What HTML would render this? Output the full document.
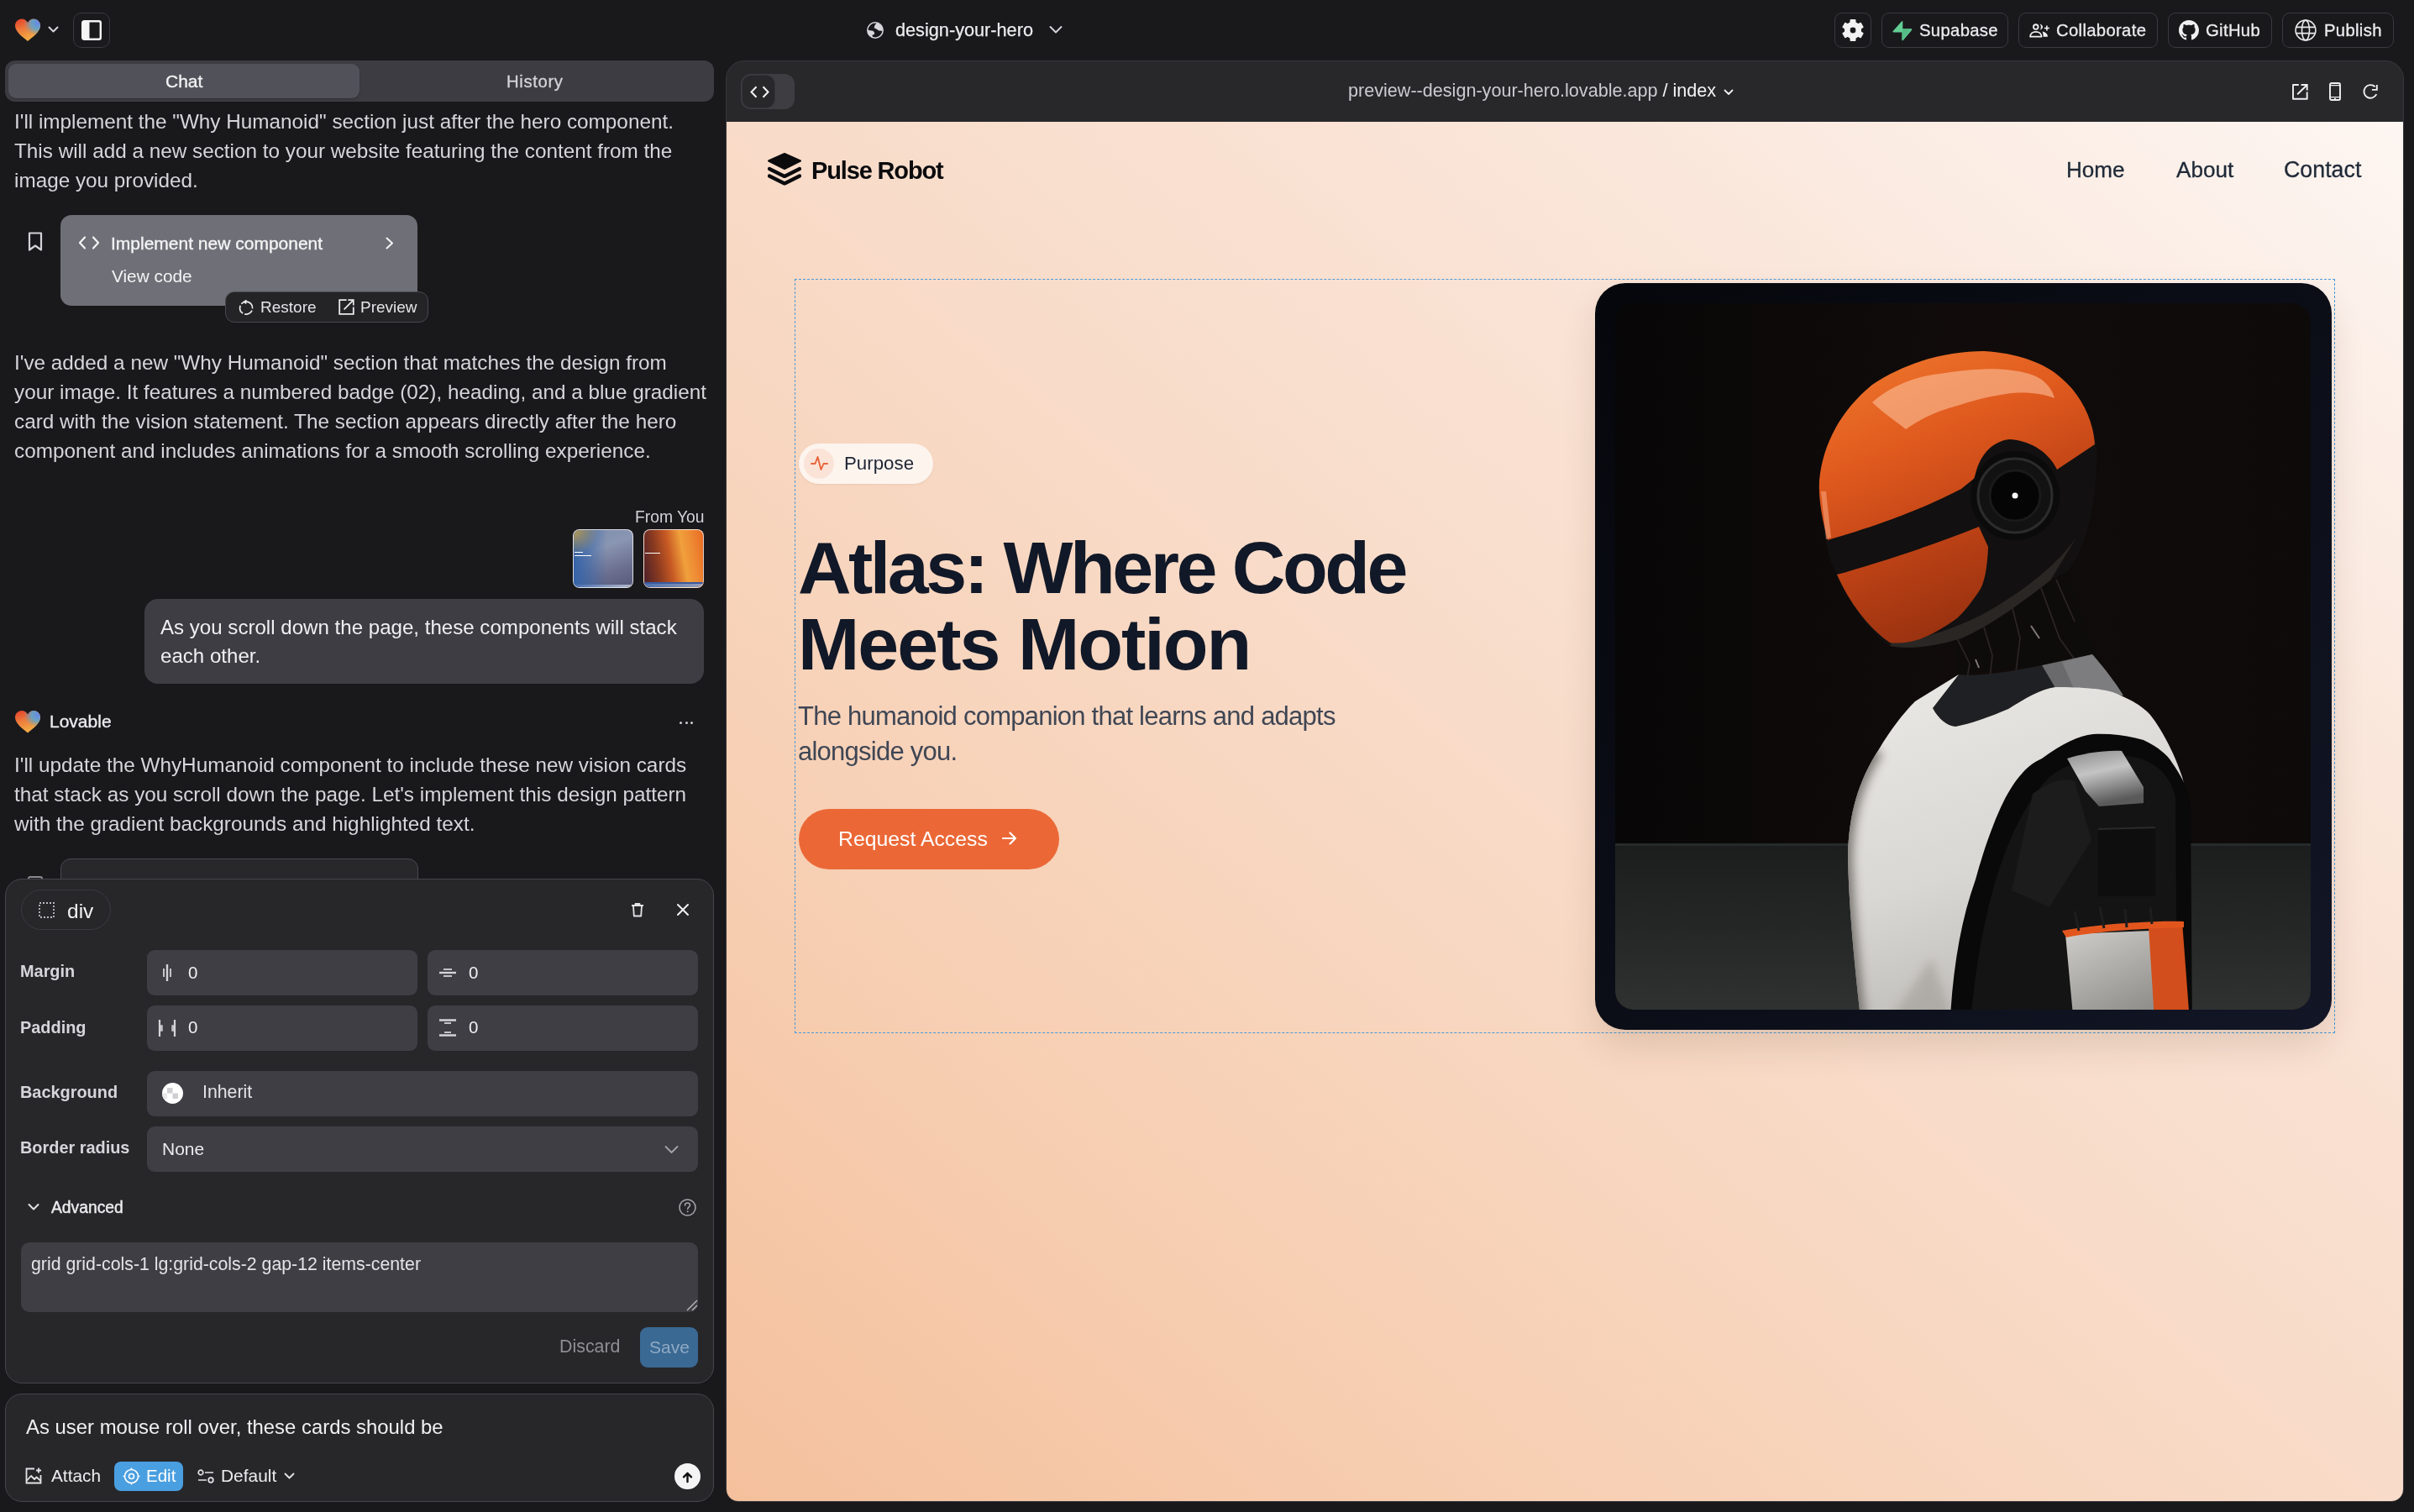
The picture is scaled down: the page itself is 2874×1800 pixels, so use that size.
<!DOCTYPE html>
<html><head><meta charset="utf-8">
<style>
*{box-sizing:border-box;margin:0;padding:0}
html,body{width:2874px;height:1800px;overflow:hidden;background:#19191c;-webkit-font-smoothing:antialiased;font-family:"Liberation Sans",sans-serif;color:#e4e4e7}
.a{position:absolute}
.t{position:absolute;white-space:nowrap;line-height:1;will-change:transform}
svg{position:absolute;overflow:visible}
.btn{position:absolute;border:1.5px solid #3a3a3f;border-radius:9px;background:#19191c}
.chat{position:absolute;left:18px;font-size:24px;line-height:35px;color:#d6d6da;white-space:nowrap;will-change:transform}
.inp{position:absolute;background:#3f3e45;border-radius:9px}
.lbl{position:absolute;font-size:21px;font-weight:bold;color:#d6d6da;white-space:nowrap;line-height:1;will-change:transform}
</style></head><body>

<!-- ===== TOP BAR ===== -->
<div id="topbar">
  <!-- heart logo -->
  <svg style="left:17px;top:22px" width="32" height="28" viewBox="0 0 32 28">
    <defs><linearGradient id="hg" x1="0.1" y1="0" x2="0.5" y2="1">
      <stop offset="0" stop-color="#e3402a"/><stop offset="0.45" stop-color="#ee7a3c"/><stop offset="1" stop-color="#f3b246"/></linearGradient>
      <radialGradient id="hb" cx="0.9" cy="0.2" r="0.55"><stop offset="0" stop-color="#6a86e8"/><stop offset="0.45" stop-color="#52a8d8" stop-opacity="0.85"/><stop offset="1" stop-color="#52a8d8" stop-opacity="0"/></radialGradient></defs>
    <path d="M16 27 C10 22 1 16 1 8.5 C1 3.5 5 0.5 9 0.5 C12 0.5 14.5 2.5 16 5 C17.5 2.5 20 0.5 23 0.5 C27 0.5 31 3.5 31 8.5 C31 16 22 22 16 27Z" fill="url(#hg)"/>
    <path d="M16 27 C10 22 1 16 1 8.5 C1 3.5 5 0.5 9 0.5 C12 0.5 14.5 2.5 16 5 C17.5 2.5 20 0.5 23 0.5 C27 0.5 31 3.5 31 8.5 C31 16 22 22 16 27Z" fill="url(#hb)"/>
  </svg>
  <svg style="left:57px;top:31px" width="13" height="9" viewBox="0 0 13 9"><path d="M1.5 1.5 L6.5 6.5 L11.5 1.5" fill="none" stroke="#d4d4d8" stroke-width="2" stroke-linecap="round" stroke-linejoin="round"/></svg>
  <div class="btn" style="left:87px;top:15px;width:44px;height:42px;border-radius:10px;background:#1a1a1d"></div>
  <svg style="left:97px;top:24px" width="24" height="24" viewBox="0 0 24 24"><rect x="1.2" y="1.2" width="21.6" height="21.6" rx="2" fill="none" stroke="#f4f4f5" stroke-width="2.4"/><rect x="1.5" y="1.5" width="8" height="21" fill="#f4f4f5"/></svg>

  <!-- project name -->
  <svg style="left:1032px;top:26px" width="20" height="20" viewBox="0 0 20 20"><circle cx="10" cy="10" r="9.2" fill="none" stroke="#d8d8dc" stroke-width="1.5"/><path d="M11.7 1.2 C10 3.2 9 4.5 8.7 7.2 C10.5 8 12 8.5 14.2 10.4 L19 10.85 A9.2 9.2 0 0 0 11.7 1.2 Z" fill="#d8d8dc"/><path d="M0.8 9.8 L7.25 10.64 C9 12 9.5 13.5 8.94 14.87 L6.2 15.9 L7.7 18.9 A9.2 9.2 0 0 1 0.8 9.8 Z" fill="#d8d8dc"/></svg>
  <div class="t" id="proj" style="left:1066px;top:24.5px;font-size:21.7px;color:#ececef;-webkit-text-stroke:0.25px #ececef">design-your-hero</div>
  <svg style="left:1249px;top:30px" width="16" height="11" viewBox="0 0 16 11"><path d="M1.5 2 L8 8.5 L14.5 2" fill="none" stroke="#d4d4d8" stroke-width="2" stroke-linecap="round" stroke-linejoin="round"/></svg>

  <!-- right buttons -->
  <div class="btn" style="left:2184px;top:15px;width:44px;height:42px"></div>
  <svg style="left:2192.5px;top:22.5px" width="26" height="26" viewBox="0 0 26 26"><path fill="#f2f2f3" fill-rule="evenodd" stroke="#f2f2f3" stroke-width="1.2" stroke-linejoin="round" d="M8.30 4.86 L9.94 4.11 L10.17 0.72 L15.83 0.72 L16.06 4.11 L17.70 4.86 L19.17 5.91 L22.22 4.41 L25.05 9.32 L22.23 11.21 L22.40 13.00 L22.23 14.79 L25.05 16.68 L22.22 21.59 L19.17 20.09 L17.70 21.14 L16.06 21.89 L15.83 25.28 L10.17 25.28 L9.94 21.89 L8.30 21.14 L6.83 20.09 L3.78 21.59 L0.95 16.68 L3.77 14.79 L3.60 13.00 L3.77 11.21 L0.95 9.32 L3.78 4.41 L6.83 5.91Z M17.00 13.00 A4 4 0 1 0 9.00 13.00 A4 4 0 1 0 17.00 13.00Z"/></svg>

  <div class="btn" style="left:2240px;top:15px;width:151px;height:42px"></div>
  <svg style="left:2253px;top:23.5px" width="24" height="25" viewBox="0 0 24 25"><defs><linearGradient id="sbg" x1="0" y1="0" x2="1" y2="1"><stop offset="0" stop-color="#4fb37f"/><stop offset="1" stop-color="#63cd94"/></linearGradient></defs><path d="M11.2 1.2 C11.6 0.7 12.3 0.9 12.3 1.6 V10.2 H22.3 C23.1 10.2 23.5 11.1 23 11.7 L12.6 24 C12.2 24.5 11.5 24.2 11.5 23.6 V14.6 H1.4 C0.6 14.6 0.2 13.7 0.7 13.1 Z" fill="#63cd94"/><path d="M12.3 10.2 H22.3 C23.1 10.2 23.5 11.1 23 11.7 L12.6 24 C12.2 24.5 11.5 24.2 11.5 23.6 V14.6 H12.3 Z" fill="url(#sbg)"/></svg>
  <div class="t" id="bsup" style="left:2284.5px;top:25.6px;font-size:20.3px;letter-spacing:0.32px;color:#ececef;-webkit-text-stroke:0.3px #ececef">Supabase</div>

  <div class="btn" style="left:2403px;top:15px;width:166px;height:42px"></div>
  <svg style="left:2414px;top:26px" width="27" height="20" viewBox="0 0 27 20"><circle cx="9.76" cy="6.06" r="2.8" fill="none" stroke="#f2f2f3" stroke-width="1.8"/><path d="M14.4 2.4 C16.6 3 18 4.5 18 6.1 C18 7.7 16.6 9.2 14.4 9.8 C15.4 8.8 15.9 7.5 15.9 6.1 C15.9 4.7 15.4 3.4 14.4 2.4 Z" fill="#f2f2f3"/><path d="M22.9 4.5 V10.5 M19.9 7.5 H25.9" stroke="#f2f2f3" stroke-width="1.6"/><path d="M3.1 17.7 C3.1 14 6 11.8 9.8 11.8 C13.6 11.8 16.5 14 16.5 17.7 Z" fill="none" stroke="#f2f2f3" stroke-width="1.8" stroke-linejoin="round"/><path d="M17.6 11.6 C20.8 12.2 23.9 14 23.9 17.7 H18.6 C18.6 15 18.3 13 17.6 11.6 Z" fill="#f2f2f3"/></svg>
  <div class="t" id="bcol" style="left:2448px;top:25.6px;font-size:20.3px;letter-spacing:0.32px;color:#ececef;-webkit-text-stroke:0.3px #ececef">Collaborate</div>

  <div class="btn" style="left:2581px;top:15px;width:124px;height:42px"></div>
  <svg style="left:2594px;top:24px" width="24" height="24" viewBox="0 0 16 16"><path fill="#f0f0f2" d="M8 0C3.58 0 0 3.58 0 8c0 3.54 2.29 6.53 5.47 7.59.4.07.55-.17.55-.38 0-.19-.01-.82-.01-1.49-2.01.37-2.53-.49-2.69-.94-.09-.23-.48-.94-.82-1.13-.28-.15-.68-.52-.01-.53.63-.01 1.08.58 1.23.82.72 1.21 1.87.87 2.33.66.07-.52.28-.87.51-1.07-1.78-.2-3.64-.89-3.64-3.95 0-.87.31-1.59.82-2.15-.08-.2-.36-1.02.08-2.12 0 0 .67-.21 2.2.82.64-.18 1.32-.27 2-.27.68 0 1.36.09 2 .27 1.53-1.04 2.2-.82 2.2-.82.44 1.1.16 1.92.08 2.12.51.56.82 1.27.82 2.15 0 3.07-1.87 3.75-3.65 3.95.29.25.54.73.54 1.48 0 1.07-.01 1.93-.01 2.2 0 .21.15.46.55.38A8.013 8.013 0 0016 8c0-4.42-3.58-8-8-8z"/></svg>
  <div class="t" id="bgit" style="left:2626px;top:25.6px;font-size:20.3px;letter-spacing:0.32px;color:#ececef;-webkit-text-stroke:0.3px #ececef">GitHub</div>

  <div class="btn" style="left:2717px;top:15px;width:133px;height:42px"></div>
  <svg style="left:2732px;top:23px" width="26" height="26" viewBox="0 0 26 26"><g fill="none" stroke="#e8e8ea" stroke-width="1.6"><circle cx="13" cy="13" r="11.9"/><ellipse cx="13" cy="13" rx="4.5" ry="11.9"/><path d="M1.7 9.4 H24.3 M1.7 16.6 H24.3"/></g></svg>
  <div class="t" id="bpub" style="left:2767px;top:25.6px;font-size:20.3px;letter-spacing:0.32px;color:#ececef;-webkit-text-stroke:0.3px #ececef">Publish</div>
</div>

<!-- ===== LEFT PANEL ===== -->
<div id="left">
  <!-- tabs -->
  <div class="a" style="left:6px;top:72px;width:844px;height:49px;background:#3d3c43;border-radius:12px"></div>
  <div class="a" style="left:10px;top:76px;width:418px;height:41px;background:#51515a;border-radius:9px;box-shadow:0 1px 2px rgba(0,0,0,0.25)"></div>
  <div class="t" id="tchat" style="left:196.5px;top:86px;font-size:21px;color:#f4f4f5;-webkit-text-stroke:0.3px #f4f4f5">Chat</div>
  <div class="t" id="thist" style="left:603.2px;top:87px;font-size:20.3px;letter-spacing:0.65px;color:#d4d4d8;-webkit-text-stroke:0.3px #d4d4d8">History</div>

  <!-- para 1 -->
  <div class="chat" id="p1" style="left:17px;top:126.6px;font-size:24.3px">I'll implement the "Why Humanoid" section just after the hero component.<br>This will add a new section to your website featuring the content from the<br>image you provided.</div>

  <!-- bookmark -->
  <svg style="left:33px;top:276px" width="18" height="23" viewBox="0 0 18 23"><path d="M2 1.5 H16 V21.5 L9 16.5 L2 21.5Z" fill="none" stroke="#d4d4d8" stroke-width="2.2" stroke-linejoin="round"/></svg>
  <!-- implement card -->
  <div class="a" style="left:72px;top:256px;width:425px;height:108px;background:#6f6f78;border-radius:13px"></div>
  <svg style="left:93px;top:281px" width="26" height="16" viewBox="0 0 26 16"><path d="M8 1.5 L2 8 L8 14.5 M18 1.5 L24 8 L18 14.5" fill="none" stroke="#f4f4f5" stroke-width="2.2" stroke-linecap="round" stroke-linejoin="round"/></svg>
  <div class="t" id="impl" style="left:131.7px;top:279px;font-size:21px;color:#f4f4f5;-webkit-text-stroke:0.35px #f4f4f5">Implement new component</div>
  <svg style="left:459px;top:282px" width="10" height="15" viewBox="0 0 10 15"><path d="M1.5 1.5 L8 7.5 L1.5 13.5" fill="none" stroke="#f4f4f5" stroke-width="2" stroke-linecap="round" stroke-linejoin="round"/></svg>
  <div class="t" id="vcode" style="left:133px;top:318.6px;font-size:20.8px;color:#f4f4f5">View code</div>
  <!-- restore/preview toolbar -->
  <div class="a" style="left:268px;top:346.5px;width:241.5px;height:37.5px;background:#242427;border:1.5px solid #48484d;border-radius:11px"></div>
  <svg style="left:284px;top:357px" width="19" height="19" viewBox="0 0 19 19"><circle cx="9.1" cy="9.6" r="7.5" fill="none" stroke="#ececef" stroke-width="1.7" stroke-dasharray="10.5 2.3" transform="rotate(-75 9.1 9.6)"/><path d="M9.6 0.6 L6.8 2.3 L9.3 4.4" fill="none" stroke="#ececef" stroke-width="1.7" stroke-linejoin="round"/></svg>
  <div class="t" id="rest" style="left:309.7px;top:356.4px;font-size:19px;color:#e4e4e7">Restore</div>
  <svg style="left:402.5px;top:355.5px" width="19" height="19" viewBox="0 0 19 19"><path d="M9.6 1.2 H1.2 V17.8 H17.8 V9.6" fill="none" stroke="#ececef" stroke-width="1.8"/><path d="M11.4 1.2 H17.8 V7.6 M6.6 12.4 L17.3 1.7" fill="none" stroke="#ececef" stroke-width="1.7"/></svg>
  <div class="t" id="prev" style="left:428.5px;top:356.4px;font-size:19px;color:#e4e4e7">Preview</div>

  <!-- para 2 -->
  <div class="chat" id="p2" style="left:17px;top:413.8px;font-size:24.3px">I've added a new "Why Humanoid" section that matches the design from<br>your image. It features a numbered badge (02), heading, and a blue gradient<br>card with the vision statement. The section appears directly after the hero<br>component and includes animations for a smooth scrolling experience.</div>

  <!-- from you -->
  <div class="t" id="fromyou" style="left:756px;top:605.7px;font-size:19.3px;color:#d4d4d8">From You</div>
  <div class="a" style="left:682px;top:630px;width:72px;height:70px;border-radius:8px;overflow:hidden;border:1px solid rgba(255,255,255,0.75);background:linear-gradient(160deg,#7a8cad 0%,#8a96b2 35%,#6c7090 70%,#565878 100%)">
    <div class="a" style="left:0;top:0;width:72px;height:70px;background:radial-gradient(circle at 0% 0%,#b89a50 0,rgba(184,154,80,0) 30%),linear-gradient(90deg,#3563a8 0,rgba(53,99,168,0.6) 25%,rgba(53,99,168,0) 55%)"></div>
    <div class="a" style="left:1px;top:26px;width:10px;height:1px;background:#fff"></div>
    <div class="a" style="left:1px;top:30px;width:20px;height:1px;background:#fff"></div>
    <div class="a" style="left:0;top:65px;width:72px;height:5px;background:linear-gradient(90deg,#4a70b0,#b8bccc)"></div>
  </div>
  <div class="a" style="left:766px;top:630px;width:72px;height:70px;border-radius:8px;overflow:hidden;border:1px solid rgba(255,255,255,0.75);background:linear-gradient(80deg,#4a1e2a 0%,#8a3a20 25%,#c85a24 45%,#f0a03c 65%,#ee8a34 80%,#e86a22 100%)">
    <div class="a" style="left:1px;top:27px;width:18px;height:1px;background:#fff"></div>
    <div class="a" style="left:0;top:62px;width:72px;height:2px;background:#3a5aa0"></div>
    <div class="a" style="left:0;top:64px;width:72px;height:6px;background:linear-gradient(90deg,#4a70b0,#9aa0b8)"></div>
  </div>
  <!-- user bubble -->
  <div class="a" style="left:172px;top:713px;width:666px;height:101px;background:#3e3d44;border-radius:16px"></div>
  <div class="chat" id="ub" style="left:190.5px;top:730.1px;font-size:24.1px;line-height:34px;color:#f0f0f2">As you scroll down the page, these components will stack<br>each other.</div>

  <!-- lovable -->
  <svg style="left:17px;top:845px" width="32" height="29" viewBox="0 0 32 28">
    <path d="M16 27 C10 22 1 16 1 8.5 C1 3.5 5 0.5 9 0.5 C12 0.5 14.5 2.5 16 5 C17.5 2.5 20 0.5 23 0.5 C27 0.5 31 3.5 31 8.5 C31 16 22 22 16 27Z" fill="url(#hg)"/>
    <path d="M16 27 C10 22 1 16 1 8.5 C1 3.5 5 0.5 9 0.5 C12 0.5 14.5 2.5 16 5 C17.5 2.5 20 0.5 23 0.5 C27 0.5 31 3.5 31 8.5 C31 16 22 22 16 27Z" fill="url(#hb)"/>
  </svg>
  <div class="t" id="lov" style="left:58.8px;top:848.2px;font-size:21px;color:#ececef;-webkit-text-stroke:0.35px #ececef">Lovable</div>
  <div class="a" style="left:809px;top:858.5px;width:3px;height:3px;border-radius:1.5px;background:#d0d0d4"></div>
  <div class="a" style="left:815.5px;top:858.5px;width:3px;height:3px;border-radius:1.5px;background:#d0d0d4"></div>
  <div class="a" style="left:822px;top:858.5px;width:3px;height:3px;border-radius:1.5px;background:#d0d0d4"></div>

  <!-- para 3 -->
  <div class="chat" id="p3" style="left:17px;top:893.1px;font-size:24.3px">I'll update the WhyHumanoid component to include these new vision cards<br>that stack as you scroll down the page. Let's implement this design pattern<br>with the gradient backgrounds and highlighted text.</div>

  <!-- next card peeking -->
  <div class="a" style="left:72px;top:1022px;width:426px;height:60px;background:#28282b;border:1.5px solid #4a4a4f;border-radius:12px"></div>
  <div class="a" style="left:33px;top:1043px;width:18px;height:10px;border:2px solid #8a8a90;border-bottom:none;border-radius:3px 3px 0 0"></div>

  <!-- ===== edit panel ===== -->
  <div class="a" style="left:6px;top:1046px;width:844px;height:601px;background:#27272a;border:1.5px solid #46464b;border-radius:20px"></div>
  <div class="a" style="left:25px;top:1059px;width:107px;height:48px;border:1.5px solid #3a3a3f;border-radius:24px"></div>
  <svg style="left:46px;top:1074px" width="19" height="19" viewBox="0 0 19 19"><rect x="1" y="1" width="17" height="17" fill="none" stroke="#bbbbc0" stroke-width="1.8" stroke-dasharray="2 2"/></svg>
  <div class="t" id="divt" style="left:80px;top:1072.5px;font-size:24.5px;color:#f0f0f2">div</div>
  <svg style="left:751px;top:1074px" width="16" height="18" viewBox="0 0 16 18"><path d="M1 4 H15 M5.5 4 V2 H10.5 V4 M3 4 L3.8 16.5 H12.2 L13 4" fill="none" stroke="#e4e4e7" stroke-width="1.8" stroke-linejoin="round"/></svg>
  <svg style="left:806px;top:1076px" width="14" height="14" viewBox="0 0 14 14"><path d="M1 1 L13 13 M13 1 L1 13" stroke="#f0f0f2" stroke-width="2" stroke-linecap="round"/></svg>

  <div class="lbl" id="lmargin" style="left:23.7px;top:1147.4px;font-size:19.9px">Margin</div>
  <div class="inp" style="left:175px;top:1131px;width:322px;height:54px"></div>
  <div class="inp" style="left:509px;top:1131px;width:322px;height:54px"></div>
  <svg style="left:193px;top:1148px" width="12" height="20" viewBox="0 0 12 20"><path d="M2 5 V15 M10 5 V15" stroke="#c4c4c8" stroke-width="2"/><path d="M6 0 V20" stroke="#d4d4d8" stroke-width="2.4"/></svg>
  <div class="t" id="m0a" style="left:223.5px;top:1147.6px;font-size:20.5px;color:#f0f0f2">0</div>
  <svg style="left:523px;top:1152px" width="20" height="12" viewBox="0 0 20 12"><path d="M5 2 H15 M5 10 H15" stroke="#c4c4c8" stroke-width="2"/><path d="M0 6 H20" stroke="#d4d4d8" stroke-width="2.4"/></svg>
  <div class="t" id="m0b" style="left:557.7px;top:1147.6px;font-size:20.5px;color:#f0f0f2">0</div>

  <div class="lbl" id="lpad" style="left:23.7px;top:1213.7px;font-size:19.9px">Padding</div>
  <div class="inp" style="left:175px;top:1197px;width:322px;height:54px"></div>
  <div class="inp" style="left:509px;top:1197px;width:322px;height:54px"></div>
  <svg style="left:188px;top:1214px" width="22" height="20" viewBox="0 0 22 20"><path d="M2 0 V20 M20 0 V20" stroke="#d4d4d8" stroke-width="2.2"/><path d="M3 7 H5 V13 H3 M19 7 H17 V13 H19" fill="#c4c4c8" stroke="#c4c4c8" stroke-width="1.5"/></svg>
  <div class="t" id="p0a" style="left:223.5px;top:1213.1px;font-size:20.5px;color:#f0f0f2">0</div>
  <svg style="left:523px;top:1213px" width="20" height="21" viewBox="0 0 20 21"><path d="M0 1.5 H20 M0 19.5 H20" stroke="#d4d4d8" stroke-width="2.4"/><path d="M6 4 H14 V6 H6Z M6 15 H14 V17 H6Z" fill="#c4c4c8"/></svg>
  <div class="t" id="p0b" style="left:557.7px;top:1213.1px;font-size:20.5px;color:#f0f0f2">0</div>

  <div class="lbl" id="lbg" style="left:23.7px;top:1291.4px;font-size:19.9px">Background</div>
  <div class="inp" style="left:175px;top:1275px;width:656px;height:54px"></div>
  <svg style="left:193px;top:1289px" width="25" height="25" viewBox="0 0 25 25"><defs><clipPath id="cc"><circle cx="12.5" cy="12.5" r="12.5"/></clipPath></defs><g clip-path="url(#cc)"><rect width="25" height="25" fill="#ffffff"/><rect x="6" y="6" width="6.5" height="6.5" fill="#d0d0d4"/><rect x="12.5" y="12.5" width="6.5" height="6.5" fill="#d0d0d4"/><rect x="0" y="12.5" width="6" height="6.5" fill="#e8e8ea"/></g></svg>
  <div class="t" id="inh" style="left:241px;top:1290.2px;font-size:21.3px;color:#e4e4e7">Inherit</div>

  <div class="lbl" id="lbr" style="left:23.7px;top:1357.4px;font-size:19.9px">Border radius</div>
  <div class="inp" style="left:175px;top:1341px;width:656px;height:54px"></div>
  <div class="t" id="none" style="left:193px;top:1356.5px;font-size:21px;color:#ececef">None</div>
  <svg style="left:791px;top:1363px" width="17" height="11" viewBox="0 0 17 11"><path d="M1.5 2 L8.5 9 L15.5 2" fill="none" stroke="#a4a4aa" stroke-width="1.8" stroke-linecap="round" stroke-linejoin="round"/></svg>

  <svg style="left:33px;top:1432px" width="14" height="10" viewBox="0 0 14 10"><path d="M1.5 2 L7 7.5 L12.5 2" fill="none" stroke="#e4e4e7" stroke-width="2" stroke-linecap="round" stroke-linejoin="round"/></svg>
  <div class="lbl" id="ladv" style="left:61.2px;top:1427.7px;font-size:19.3px;font-weight:normal;color:#ececef;-webkit-text-stroke:0.4px #ececef">Advanced</div>
  <svg style="left:808px;top:1427px" width="21" height="21" viewBox="0 0 21 21"><circle cx="10.5" cy="10.5" r="9.5" fill="none" stroke="#a4a4aa" stroke-width="1.6"/><path d="M7.5 8 C7.5 6 9 5 10.5 5 C12 5 13.5 6 13.5 7.8 C13.5 9.8 10.7 10 10.7 12.3" fill="none" stroke="#a4a4aa" stroke-width="1.6" stroke-linecap="round"/><circle cx="10.7" cy="15.3" r="1" fill="#a4a4aa"/></svg>

  <div class="inp" style="left:25px;top:1479px;width:806px;height:83px;border-radius:10px"></div>
  <div class="t" id="ta" style="left:36.5px;top:1494.5px;font-size:21.3px;color:#e4e4e7">grid grid-cols-1 lg:grid-cols-2 gap-12 items-center</div>
  <svg style="left:816px;top:1546px" width="15" height="15" viewBox="0 0 15 15"><path d="M14 2 L2 14 M14 8 L8 14" stroke="#b0b0b4" stroke-width="1.5"/></svg>

  <div class="t" id="disc" style="left:665.5px;top:1592.5px;font-size:21.4px;color:#8e8e94">Discard</div>
  <div class="a" style="left:762px;top:1580px;width:69px;height:48px;background:#3a6994;border-radius:9px"></div>
  <div class="t" id="save" style="left:772.5px;top:1592.5px;font-size:21px;color:#90aac2">Save</div>

  <!-- ===== input box ===== -->
  <div class="a" style="left:6px;top:1659px;width:844px;height:129px;background:#27272a;border:1.5px solid #46464b;border-radius:20px"></div>
  <div class="t" id="inp" style="left:31.2px;top:1687px;font-size:23.9px;color:#f0f0f2">As user mouse roll over, these cards should be</div>
  <svg style="left:30px;top:1747px" width="21" height="20" viewBox="0 0 21 20"><path d="M11 1.5 H1.5 V18.5 H18.5 V9" fill="none" stroke="#e4e4e7" stroke-width="1.8"/><path d="M1.5 16 L7 10 L11 14 L13.5 11.5 L18.5 16" fill="none" stroke="#e4e4e7" stroke-width="1.8" stroke-linejoin="round"/><path d="M16 0.5 V6.5 M13 3.5 H19" stroke="#e4e4e7" stroke-width="1.8"/></svg>
  <div class="t" id="att" style="left:61.2px;top:1746.8px;font-size:20.8px;color:#ececef">Attach</div>
  <div class="a" style="left:136px;top:1740px;width:82px;height:35px;background:#4a9fe0;border-radius:8px"></div>
  <svg style="left:146px;top:1747px" width="21" height="21" viewBox="0 0 21 21"><circle cx="10.5" cy="10.5" r="8" fill="none" stroke="#fff" stroke-width="1.6"/><circle cx="10.5" cy="10.5" r="3" fill="none" stroke="#fff" stroke-width="1.6"/><path d="M10.5 0.5 V3 M10.5 18 V20.5 M0.5 10.5 H3 M18 10.5 H20.5" stroke="#fff" stroke-width="1.6"/></svg>
  <div class="t" id="edit" style="left:173.5px;top:1746.8px;font-size:20.5px;color:#ffffff">Edit</div>
  <svg style="left:235px;top:1749px" width="20" height="17" viewBox="0 0 20 17"><circle cx="4" cy="4" r="2.8" fill="none" stroke="#e4e4e7" stroke-width="1.7"/><path d="M9 4 H19 M1 13 H11" stroke="#e4e4e7" stroke-width="1.7"/><circle cx="16" cy="13" r="2.8" fill="none" stroke="#e4e4e7" stroke-width="1.7"/></svg>
  <div class="t" id="def" style="left:262.7px;top:1746.8px;font-size:20.9px;color:#ececef">Default</div>
  <svg style="left:338px;top:1753px" width="13" height="9" viewBox="0 0 13 9"><path d="M1.5 1.5 L6.5 6.5 L11.5 1.5" fill="none" stroke="#e4e4e7" stroke-width="1.8" stroke-linecap="round" stroke-linejoin="round"/></svg>
  <div class="a" style="left:803px;top:1742px;width:31px;height:31px;border-radius:50%;background:#f4f4f5"></div>
  <svg style="left:812px;top:1751.5px" width="13" height="13" viewBox="0 0 13 13"><path d="M6.5 12 V2 M2 6.3 L6.5 1.8 L11 6.3" fill="none" stroke="#111113" stroke-width="2.4" stroke-linecap="round" stroke-linejoin="round"/></svg>
</div>

<!-- ===== PREVIEW ===== -->
<div id="preview">
  <div class="a" style="left:864px;top:72px;width:1998px;height:1716px;background:#28282b;border:1.5px solid #38383c;border-radius:22px 22px 15px 15px;overflow:hidden">
    <!-- peach page -->
    <div class="a" style="left:0px;top:71.5px;width:1997px;height:1650px;background:linear-gradient(to top right,#f4c09c 0%,#f7cfb3 25%,#f8dbc8 50%,#fae6da 75%,#fdf6f2 100%)">
    </div>
  </div>
  <!-- header controls -->
  <div class="a" style="left:882px;top:88px;width:64px;height:42px;background:#3e3e42;border-radius:12px"></div>
  <div class="a" style="left:883px;top:89px;width:40px;height:40px;background:#28282b;border-radius:11px;border:1px solid #353539"></div>
  <svg style="left:893px;top:101.5px" width="23" height="15" viewBox="0 0 23 15"><path d="M7.5 1.2 L1.5 7.5 L7.5 13.8 M15.5 1.2 L21.5 7.5 L15.5 13.8" fill="none" stroke="#f4f4f5" stroke-width="2"/></svg>
  <div class="t" id="url" style="left:1605px;top:96.7px;font-size:21.6px;color:#cbcbd0">preview--design-your-hero.lovable.app <span style="color:#f4f4f5">/ index</span></div>
  <svg style="left:2052px;top:106px" width="12" height="8" viewBox="0 0 12 8"><path d="M1.5 1.5 L6 6 L10.5 1.5" fill="none" stroke="#f0f0f2" stroke-width="1.8" stroke-linecap="round" stroke-linejoin="round"/></svg>
  <svg style="left:2729px;top:100px" width="19" height="19" viewBox="0 0 19 19"><path d="M7.8 1 H1 V17.7 H17.7 V9.6" fill="none" stroke="#f0f0f2" stroke-width="1.9" stroke-linejoin="round"/><path d="M10.6 1 H17.7 V7.6 M6.2 12.3 L17 1.7" fill="none" stroke="#f0f0f2" stroke-width="1.9"/></svg>
  <svg style="left:2773px;top:98px" width="14" height="22" viewBox="0 0 14 22"><rect x="1" y="1" width="12" height="20" rx="1.8" fill="none" stroke="#f0f0f2" stroke-width="1.9"/><path d="M1 3.6 H13 M1 17.6 H13" stroke="#f0f0f2" stroke-width="1.4"/><path d="M6 19.3 H8" stroke="#f0f0f2" stroke-width="1.3"/></svg>
  <svg style="left:2812px;top:99px" width="20" height="20" viewBox="0 0 20 20"><path d="M17.3 13.2 A7.8 7.8 0 1 1 15.6 4.3" fill="none" stroke="#f0f0f2" stroke-width="1.9"/><path d="M17.8 2 V7.9 H11.9" fill="none" stroke="#f0f0f2" stroke-width="1.9"/></svg>

  <!-- site nav -->
  <svg style="left:914px;top:182px" width="40" height="40" viewBox="0 0 40 40"><path d="M20 1 L39 9.5 L20 19 L1 9.5Z" fill="#0b0b0e" stroke="#0b0b0e" stroke-width="2" stroke-linejoin="round"/><path d="M2 19 L20 28 L38 19 M2 27.5 L20 36.5 L38 27.5" fill="none" stroke="#0b0b0e" stroke-width="4.2" stroke-linecap="round" stroke-linejoin="round"/></svg>
  <div class="t" id="logo" style="left:966px;top:189.2px;font-size:29px;font-weight:bold;color:#0b0b0e;letter-spacing:-1.15px">Pulse Robot</div>
  <div class="t" id="nhome" style="left:2460.4px;top:189.2px;font-size:26.1px;color:#1f2937;-webkit-text-stroke:0.3px #1f2937">Home</div>
  <div class="t" id="nabout" style="left:2590.5px;top:189.2px;font-size:26.15px;color:#1f2937;-webkit-text-stroke:0.3px #1f2937">About</div>
  <div class="t" id="ncontact" style="left:2719px;top:189.2px;font-size:26.8px;color:#1f2937;-webkit-text-stroke:0.3px #1f2937">Contact</div>

  <!-- selection box -->
  <div class="a" style="left:946px;top:332px;width:1834px;height:898px;border:1px dashed #4c9ad8"></div>

  <!-- purpose badge -->
  <div class="a" style="left:951px;top:528px;width:160px;height:48px;border-radius:24px;background:rgba(255,255,255,0.72);box-shadow:0 1px 3px rgba(0,0,0,0.06)"></div>
  <div class="a" style="left:957px;top:534px;width:36px;height:36px;border-radius:18px;background:#fbe3d8"></div>
  <svg style="left:965px;top:542px" width="21" height="20" viewBox="0 0 21 20"><path d="M1 10 H5.5 L8.5 2 L12.5 17 L15.5 10 H20" fill="none" stroke="#e8643a" stroke-width="1.9" stroke-linecap="round" stroke-linejoin="round"/></svg>
  <div class="t" id="purp" style="left:1004.6px;top:541.1px;font-size:22.3px;color:#1e2433">Purpose</div>

  <!-- heading -->
  <div class="t" id="h1" style="left:950px;top:630.2px;font-size:88px;font-weight:bold;color:#111827;line-height:91px;letter-spacing:-3.5px">Atlas: Where Code<br><span style="letter-spacing:-2px">Meets Motion</span></div>
  <div class="t" id="sub" style="left:950px;top:831.7px;font-size:31px;color:#3f4654;line-height:41.6px;letter-spacing:-0.76px">The humanoid companion that learns and adapts<br>alongside you.</div>

  <!-- button -->
  <div class="a" style="left:951px;top:963px;width:310px;height:72px;border-radius:36px;background:#eb6836"></div>
  <div class="t" id="req" style="left:998px;top:987px;font-size:24.8px;color:#ffffff">Request Access</div>
  <svg style="left:1192px;top:989px" width="19" height="18" viewBox="0 0 19 18"><path d="M2 9 H17 M10.5 2.5 L17 9 L10.5 15.5" fill="none" stroke="#fff" stroke-width="2.2" stroke-linecap="round" stroke-linejoin="round"/></svg>

  <!-- image card -->
  <div class="a" style="left:1899px;top:337px;width:877px;height:889px;border-radius:36px;background:linear-gradient(135deg,#05070c 0%,#0b0e17 50%,#121626 100%);box-shadow:0 20px 40px rgba(60,30,10,0.12)"></div>
  <div class="a" id="robot" style="left:1923px;top:361px;width:828px;height:841px;border-radius:22px;overflow:hidden;background:#0e0a0a">
   <svg style="left:-23px;top:-25px" width="880" height="894" viewBox="1900 336 880 894">
    <defs>
      <linearGradient id="bgg" x1="0" y1="0" x2="1" y2="0"><stop offset="0" stop-color="#070606"/><stop offset="0.5" stop-color="#110c0b"/><stop offset="1" stop-color="#0d0a0a"/></linearGradient>
      <linearGradient id="flg" x1="0" y1="0" x2="0" y2="1"><stop offset="0" stop-color="#1c1e1e"/><stop offset="0.45" stop-color="#242726"/><stop offset="1" stop-color="#323534"/></linearGradient>
      <filter id="blr" x="-50%" y="-50%" width="200%" height="200%"><feGaussianBlur stdDeviation="6"/></filter>
      <linearGradient id="org" x1="0" y1="0" x2="0.6" y2="1"><stop offset="0" stop-color="#f07a2e"/><stop offset="0.5" stop-color="#e05a1e"/><stop offset="1" stop-color="#b83d14"/></linearGradient>
      <linearGradient id="org2" x1="0" y1="0" x2="0.5" y2="1"><stop offset="0" stop-color="#cf4a18"/><stop offset="1" stop-color="#9a3210"/></linearGradient>
      <linearGradient id="plate" x1="0" y1="0" x2="0.3" y2="1"><stop offset="0" stop-color="#8a8a8a"/><stop offset="0.45" stop-color="#c4c4c4"/><stop offset="1" stop-color="#5a5a5a"/></linearGradient>
      <linearGradient id="armg" x1="0" y1="0" x2="0.4" y2="1"><stop offset="0" stop-color="#cfcdc9"/><stop offset="1" stop-color="#8f8d89"/></linearGradient>
      <linearGradient id="wht" x1="0" y1="0" x2="0.3" y2="1"><stop offset="0" stop-color="#ebe9e5"/><stop offset="0.6" stop-color="#d9d7d3"/><stop offset="1" stop-color="#bdbbb7"/></linearGradient>
    </defs>
    <rect x="1900" y="336" width="880" height="894" fill="url(#bgg)"/>
    <rect x="1900" y="1005" width="880" height="225" fill="url(#flg)"/>
    <rect x="1900" y="1004" width="880" height="3" fill="#262a2b"/>
    <!-- neck -->
    <path d="M2322 745 L2441 691 L2462 680 L2482 740 L2495 779 L2431 792 L2332 803 Z" fill="#0e0c0b"/>
    <path d="M2325 750 L2345 790 L2338 830 M2360 740 L2372 780 L2366 835 M2395 720 L2405 760 L2400 800 M2430 700 L2452 760 L2470 785 M2448 690 L2470 740" fill="none" stroke="#3a3232" stroke-width="1.6" opacity="0.7"/>
    <path d="M2352 785 L2356 795 M2418 745 L2428 760" stroke="#807878" stroke-width="2"/>
    <!-- collar -->
    <path d="M2332 803 C2360 806 2400 798 2431 792 L2447 819 C2420 826 2402 836 2391 844 C2370 853 2345 862 2328 865 C2314 862 2305 852 2301 843 Z" fill="#1f2023"/>
    <path d="M2431 792 L2491 779 C2505 795 2518 812 2528 828 L2447 819 Z" fill="#6a6a6c"/>
    <path d="M2455 788 L2491 779 C2505 795 2518 812 2528 828 L2470 822 Z" fill="#8a8a8c" opacity="0.6"/>
    <!-- torso white -->
    <path d="M2217 1230 C2208 1150 2201 1080 2200 1019 C2201 970 2212 930 2237 892 C2250 870 2265 850 2280 835 L2332 803 L2301 843 C2308 856 2318 864 2328 865 C2345 862 2370 853 2391 844 C2410 832 2430 820 2447 818 C2480 818 2505 820 2518 825 C2540 834 2552 842 2560 851 C2575 870 2590 900 2598 925 C2602 940 2604 955 2604 960 L2604 1230 Z" fill="url(#wht)"/>
    <clipPath id="tclip"><path d="M2217 1230 C2208 1150 2201 1080 2200 1019 C2201 970 2212 930 2237 892 C2250 870 2265 850 2280 835 L2332 803 L2301 843 C2308 856 2318 864 2328 865 C2345 862 2370 853 2391 844 C2410 832 2430 820 2447 818 C2480 818 2505 820 2518 825 C2540 834 2552 842 2560 851 C2575 870 2590 900 2598 925 C2602 940 2604 955 2604 960 L2604 1230 Z"/></clipPath>
    <g clip-path="url(#tclip)"><path d="M2212 1230 C2203 1150 2196 1080 2195 1019 C2196 970 2207 930 2232 892" fill="none" stroke="#6e6a66" stroke-width="22" filter="url(#blr)" opacity="0.85"/><path d="M2240 1230 L2300 1140 L2330 1230 Z" fill="#9a9690" filter="url(#blr)" opacity="0.5"/></g>
    <!-- black shoulder/torso -->
    <path d="M2321 1230 C2324 1160 2333 1100 2352 1047 C2362 1010 2375 975 2385 955 C2400 925 2415 910 2431 903 C2455 885 2475 876 2492 874 C2515 873 2535 876 2552 881 C2570 890 2580 898 2586 908 C2596 922 2606 940 2608 960 L2610 1230 Z" fill="#090909"/>
    <path d="M2345 1230 C2350 1160 2362 1090 2380 1035 C2395 990 2415 950 2440 925 C2470 902 2510 896 2545 902 C2570 910 2585 925 2590 950 L2592 1230 Z" fill="#141414"/>
    <path d="M2461 903 C2480 897 2505 893 2526 894 L2552 937 L2552 956 L2499 960 L2483 942 Z" fill="url(#plate)"/>
    <path d="M2420 945 C2440 930 2458 925 2470 930 L2490 1000 L2440 1080 L2395 1060 Z" fill="#1c1c1c"/>
    <rect x="2498" y="987" width="68" height="80" fill="#0e0e0e"/>
    <path d="M2498 987 L2566 985" stroke="#2a2a2a" stroke-width="2"/>
    <!-- arm -->
    <path d="M2459 1112 L2560 1108 L2566 1230 L2470 1230 Z" fill="url(#armg)"/>
    <path d="M2558 1103 L2598 1097 L2608 1230 L2566 1230 Z" fill="#d24e1c"/>
    <path d="M2455 1108 C2500 1100 2560 1096 2600 1097 L2600 1104 C2560 1105 2500 1108 2460 1116 Z" fill="#e2561e"/>
    <path d="M2470 1085 L2475 1108 M2500 1080 L2505 1105 M2530 1082 L2532 1104 M2560 1080 L2562 1100" stroke="#1e1e1e" stroke-width="3"/>
    <!-- helmet silhouette -->
    <path d="M2166 572 C2170 530 2190 490 2229 458 C2270 430 2320 418 2362 418 C2400 420 2435 432 2454 450 C2478 470 2492 500 2496 530 C2498 580 2490 630 2472 665 L2462 680 L2441 691 C2410 715 2370 745 2335 760 C2300 771 2270 773 2250 769 C2225 752 2200 717 2179 666 C2170 636 2165 600 2166 572 Z" fill="#121010"/>
    <path d="M2441 691 C2410 715 2370 745 2335 760 C2300 771 2270 773 2250 769 L2252 764 C2290 762 2340 745 2380 720 C2420 695 2450 670 2472 640 Z" fill="#2a2624"/>
    <!-- orange dome -->
    <path d="M2176 643 C2168 612 2165 592 2166 572 C2170 530 2190 490 2229 458 C2270 430 2320 418 2362 418 C2400 420 2435 432 2454 450 C2478 470 2492 500 2494 529 L2449 559 C2440 540 2420 525 2393 523 C2370 525 2355 545 2351 569 L2335 582 C2300 600 2255 620 2176 643 Z" fill="url(#org)"/>
    <!-- highlight -->
    <path d="M2229 479 C2250 460 2280 448 2309 445 C2340 440 2370 438 2388 440 C2410 442 2425 447 2432 453 C2440 460 2444 466 2446 474 C2430 468 2410 466 2388 469 C2360 473 2340 480 2320 486 C2300 492 2285 500 2269 511 C2255 500 2240 490 2229 479 Z" fill="#ffc9a6" opacity="0.55"/>
    <path d="M2168 585 L2174 585 L2180 640 L2174 642 Z" fill="#f7a27a" opacity="0.6"/>
    <!-- orange lower -->
    <path d="M2187 684 C2230 672 2300 650 2356 627 L2367 651 C2366 678 2362 696 2356 704 C2348 716 2338 729 2330 736 C2312 749 2295 758 2282 762 C2268 766 2258 766 2250 765 C2225 748 2202 718 2187 684 Z" fill="url(#org2)"/>
    <!-- eye -->
    <circle cx="2399" cy="590" r="53" fill="#0b0b0b"/>
    <circle cx="2399" cy="590" r="44" fill="#121212" stroke="#2c2c2c" stroke-width="3"/>
    <circle cx="2399" cy="590" r="30" fill="#050505" stroke="#1a1a1a" stroke-width="3"/>
    <circle cx="2399" cy="590" r="3.5" fill="#ffffff"/>
   </svg>
  </div>
</div>

<script>(function(){var w=window.innerWidth;if(w&&Math.abs(w-2874)>2){document.documentElement.style.zoom=(w/2874);}})();</script>
</body></html>
